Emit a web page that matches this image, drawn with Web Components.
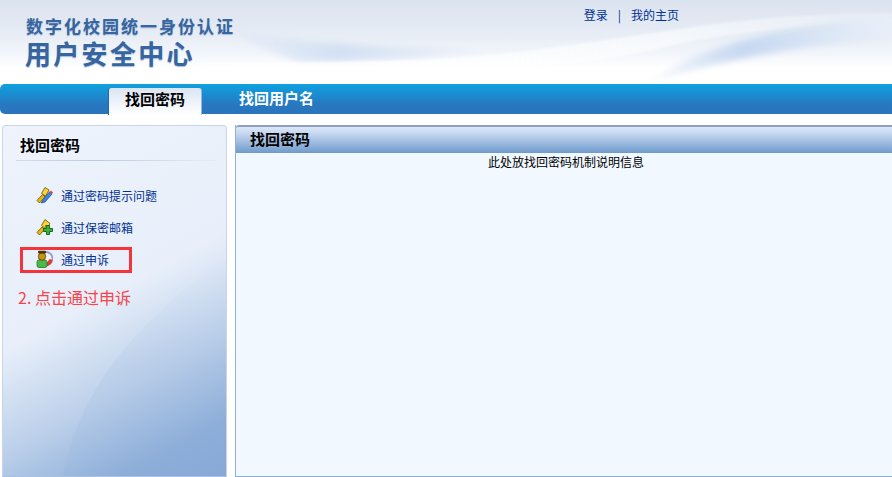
<!DOCTYPE html>
<html lang="zh"><head><meta charset="utf-8"><title>用户安全中心</title>
<style>
html,body{margin:0;padding:0;height:100%;overflow:hidden;background:#fff}
body{font:12px "Noto Sans CJK SC","Liberation Sans",sans-serif;display:flex;flex-direction:column;height:477px}
</style></head><body>
<template id="t-header"><style>
:host{display:flex;height:84px;position:relative;overflow:hidden;flex:none;justify-content:space-between;background:linear-gradient(#dbe3ef 0,#e5ebf4 30px,#f3f6fb 55px,#fff 68px)}
svg.bg{position:absolute;left:0;top:0;width:892px;height:84px}
.logo{position:relative;padding:16px 0 0 26px;color:#37659f;font-family:"Liberation Sans","Noto Sans CJK SC",sans-serif;font-weight:700;line-height:1}
.a{font-size:17px;letter-spacing:2px;line-height:24px;white-space:nowrap;text-shadow:0 1px 1px #a9bcd8}
.b{font-size:26px;letter-spacing:2.3px;line-height:30px;margin-left:-1px;white-space:nowrap;text-shadow:0 1px 1px #a9bcd8}
.links{position:relative;padding:7px 213px 0 0;display:flex;gap:10px;height:16px;line-height:16px;color:#003092;font-size:12px}
</style><svg class="bg" viewBox="0 0 892 84" aria-hidden="true"><defs>
<filter id="bl" x="-5%" y="-20%" width="110%" height="140%"><feGaussianBlur stdDeviation="1.2"/></filter>
<filter id="bl2" x="-5%" y="-30%" width="110%" height="160%"><feGaussianBlur stdDeviation="3"/></filter>
<linearGradient id="sw" x1="0" x2="1" y1="0" y2="0"><stop offset="0" stop-color="#c9daf2" stop-opacity="0"/><stop offset=".4" stop-color="#c6d8f1"/><stop offset=".72" stop-color="#dbe6f5"/><stop offset="1" stop-color="#e9eff9"/></linearGradient>
<linearGradient id="lb" x1="0" x2="1" y1="0" y2="0"><stop offset="0" stop-color="#d4e1f3" stop-opacity=".2"/><stop offset=".4" stop-color="#d4e1f3"/><stop offset="1" stop-color="#d4e1f3" stop-opacity="0"/></linearGradient>
<linearGradient id="wh" x1="0" x2="1" y1="0" y2="0"><stop offset="0" stop-color="#fff" stop-opacity="0"/><stop offset=".4" stop-color="#fff" stop-opacity=".75"/><stop offset=".75" stop-color="#fff" stop-opacity=".55"/><stop offset="1" stop-color="#fff" stop-opacity=".2"/></linearGradient></defs>
<path d="M232 30C300 44 400 46 500 50 440 58 380 62 300 62 270 52 245 42 232 30Z" fill="url(#lb)" filter="url(#bl2)"/>
<path d="M0 66C180 62 300 64 420 60 520 56 600 40 700 26 780 15 850 13 892 13V24C800 24 720 34 660 48 620 58 560 68 480 68 300 72 120 70 0 66Z" fill="url(#wh)" filter="url(#bl)"/>
<path d="M645 84C665 66 715 44 790 30 830 22 860 18 892 16V40C830 42 770 52 725 62 690 70 665 78 645 84Z" fill="url(#sw)" filter="url(#bl2)"/>
</svg>
<div class="logo"><div class="a">数字化校园统一身份认证</div><div class="b">用户安全中心</div></div>
<div class="links"><slot></slot></div></template>

<template id="t-nav"><style>
:host{display:flex;height:30px;flex:none;background:linear-gradient(#0ea1e0,#2877bf 70%,#2a75bd);border-radius:5px 0 0 5px;padding-left:108px;margin-bottom:11px;align-items:flex-end;gap:37px;box-sizing:border-box}
</style><slot></slot></template>

<template id="t-tab"><style>
:host{display:flex;align-items:center;justify-content:center;font-size:15px;font-weight:700;line-height:20px;white-space:nowrap;color:#fff;padding-bottom:3px;box-sizing:border-box;height:30px}
:host([active]){width:94px;height:27px;color:#000;margin-bottom:-1px;padding-bottom:5px;background:linear-gradient(#dbe5f3,#f1f5fb 60%,#fff);border-radius:3px 3px 0 0;border-right:1px solid #8fb9e0;border-left:1px solid #1c69b0}
</style><slot></slot></template>

<template id="t-side"><style>
:host{display:flex;flex-direction:column;width:225px;margin-left:2px;flex:none;box-sizing:border-box;border:1px solid #c7d5e8;border-bottom-color:#a9c1e0;border-radius:4px 4px 0 0;overflow:hidden;position:relative;background:linear-gradient(152deg,#eef3fc 0,#e8effa 48%,#bcd0ea 70%,#8fb0da 88%,#89a9d7 100%)}
.t{font-size:15px;font-weight:700;color:#000;line-height:20px;padding:9px 0 0 17px;position:relative}
.d{height:1px;margin:5px 10px 0 13px;background:linear-gradient(90deg,#d4ddeb,#bccadf 40%,#e6ecf6);position:relative}
.l{display:flex;flex-direction:column;padding:18px 0 0 17px;position:relative}
svg{position:absolute;left:0;bottom:0;width:225px;height:220px}
</style><svg viewBox="0 0 225 220" aria-hidden="true"><defs><linearGradient id="sf" x1="0" x2="0" y1="0" y2="1"><stop offset="0" stop-color="#7e9fd1" stop-opacity="0"/><stop offset=".5" stop-color="#7e9fd1" stop-opacity=".1"/></linearGradient></defs><path d="M60 220C72 160 100 90 225 0V220Z" fill="url(#sf)"/></svg>
<div class="t"><slot name="title"></slot></div><div class="d"></div><div class="l"><slot></slot></div></template>

<template id="t-link"><style>
:host{display:flex;align-items:center;height:32px;gap:8px;color:#003092;font-size:12px;white-space:nowrap;padding-left:16px;box-sizing:border-box}
::slotted(svg){width:17px;height:18px;flex:none}
</style><slot name="icon"></slot><slot></slot></template>

<template id="t-hl"><style>
:host{display:block;width:112px;height:26px;box-sizing:border-box;border:3px solid #f5333a;margin-top:4px}
::slotted(side-link){height:18px;margin-left:-3px}
</style><slot></slot></template>

<template id="t-note"><style>
:host{display:block;color:#f5444c;font-size:16px;line-height:22px;margin:13px 0 0 -2px;white-space:nowrap}
</style><slot></slot></template>

<template id="t-panel"><style>
:host{display:flex;flex-direction:column;flex:1;min-width:0;margin-left:8px;box-sizing:border-box;border-left:1px solid #8db0d8;border-bottom:1px solid #8db0d8;background:#f1f8ff}
.h{height:28px;box-sizing:border-box;border-top:2px solid #8e9fc2;border-radius:3px 0 0 0;background:linear-gradient(#dde7f8,#c6d7f0 25%,#6e9bcc);font-size:15px;font-weight:700;color:#000;line-height:24px;padding-left:14px}
.c{text-align:center;padding-left:4px;line-height:18px;color:#000;font-size:12px}
</style><div class="h"><slot name="title"></slot></div><div class="c"><slot></slot></div></template>

<template id="t-main"><style>:host{display:flex;flex:1;min-height:0}</style><slot></slot></template>

<site-header><span>登录</span><span>|</span><span>我的主页</span></site-header>
<site-nav><nav-tab active>找回密码</nav-tab><nav-tab>找回用户名</nav-tab></site-nav>
<site-main>
<side-panel><span slot="title">找回密码</span>
<side-link><svg slot="icon" viewBox="0 0 17 18"><path d="M1 14.500l2.500 2.500 5.500-6-2.500-2.500z" fill="#e8b80e" stroke="#7a5d05" stroke-width=".9"/><path d="M5.500 7.500L9 1.500l4 2.500-1 2-2.500 4z" fill="#f7d43a" stroke="#7a5d05" stroke-width=".9"/><path d="M6.500 14l7-8 2.500 2-7 8-3.500 1z" fill="#3f86e0" stroke="#1c4f9c" stroke-width=".8"/><path d="M13.500 6l1.500-1.500 2 2-1 1.500z" fill="#e5433a"/></svg>通过密码提示问题</side-link>
<side-link><svg slot="icon" viewBox="0 0 17 18"><path d="M1 14.500l2.500 2.500 5-5.500-2.500-2.500z" fill="#e8b80e" stroke="#7a5d05" stroke-width=".9"/><path d="M5.500 7.500L9 1.500l5 4-1.500 2.500-3-.5-.5 3z" fill="#f7d43a" stroke="#7a5d05" stroke-width=".9"/><path d="M10.500 7.500h3v3h3v3h-3v3h-3v-3h-3v-3h3z" fill="#3ab53a" stroke="#135c13" stroke-width=".9"/></svg>通过保密邮箱</side-link>
<hl-box><side-link><svg slot="icon" viewBox="0 0 17 18"><circle cx="10" cy="8.500" r="6.500" fill="#f4f4fb" stroke="#8f9bd6" stroke-width="1.800"/><path d="M9 16.500a8 8 0 0 0 7.500-6.500l-2.800-1-3.200 4z" fill="#e23a30"/><rect x="1" y="10" width="10" height="7.500" rx="2" fill="#4db84a" stroke="#1f7a24" stroke-width=".8"/><circle cx="6" cy="6.500" r="3.700" fill="#c8930f" stroke="#5e4305" stroke-width=".8"/><rect x="2" y=".8" width="8" height="2.800" rx="1" fill="#4a3505"/></svg>通过申诉</side-link></hl-box>
<note-text>2. 点击通过申诉</note-text>
</side-panel>
<content-panel><span slot="title">找回密码</span>此处放找回密码机制说明信息</content-panel>
</site-main>
<script>
const reg=(n,t)=>customElements.define(n,class extends HTMLElement{constructor(){super();this.attachShadow({mode:'open'}).appendChild(document.getElementById(t).content.cloneNode(true))}});
reg('site-header','t-header');reg('site-nav','t-nav');reg('nav-tab','t-tab');reg('site-main','t-main');reg('side-panel','t-side');reg('side-link','t-link');reg('hl-box','t-hl');reg('note-text','t-note');reg('content-panel','t-panel');
</script>
</body></html>
